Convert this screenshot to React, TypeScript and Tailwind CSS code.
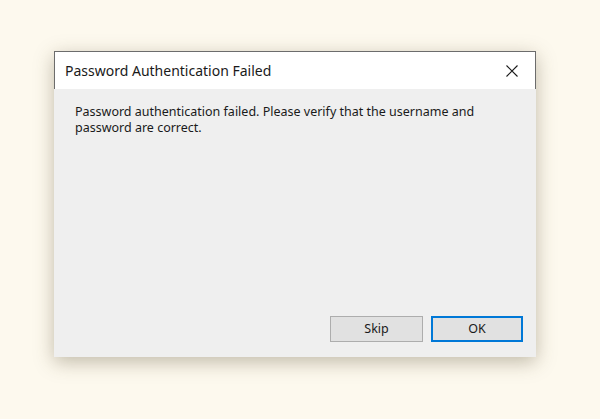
import React from "react";

export default function App() {
  return (
    <div className="w-[600px] h-[419px] bg-[#fdf9ee] pl-[54px] pt-[51px]" style={{ fontFamily: '"Noto Sans", "Open Sans", sans-serif' }}>
      <div className="w-[482px] h-[306px] flex flex-col shadow-[0_5px_18px_rgba(80,70,40,0.35)]">
        <div className="h-[38px] bg-white border-t border-l border-r border-[#6c6c6c] flex items-center justify-between pl-[10px]">
          <span className="text-[14px] text-[#1a1a1a] leading-none whitespace-nowrap">Password Authentication Failed</span>
          <div className="w-[46px] h-full flex items-center justify-center">
            <svg width="12" height="12" viewBox="0 0 12 12">
              <path d="M0.5 0.5 L11.5 11.5 M11.5 0.5 L0.5 11.5" stroke="#1a1a1a" strokeWidth="1.1" fill="none" />
            </svg>
          </div>
        </div>
        <div className="flex-1 bg-[#efefef] flex flex-col pl-[21px] pr-[13px] pt-[15px] pb-[15px]">
          <p className="text-[12.5px] leading-[16px] text-[#1a1a1a] whitespace-nowrap">
            Password authentication failed. Please verify that the username and
            <br />
            password are correct.
          </p>
          <div className="mt-auto flex justify-end gap-[8px]">
            <button className="w-[93px] h-[26px] bg-[#e1e1e1] border border-[#adadad] text-[12.5px] text-[#1a1a1a] flex items-center justify-center">
              Skip
            </button>
            <button className="w-[92px] h-[26px] bg-[#e1e1e1] border-2 border-[#0078d7] text-[12.5px] text-[#1a1a1a] flex items-center justify-center">
              OK
            </button>
          </div>
        </div>
      </div>
    </div>
  );
}
